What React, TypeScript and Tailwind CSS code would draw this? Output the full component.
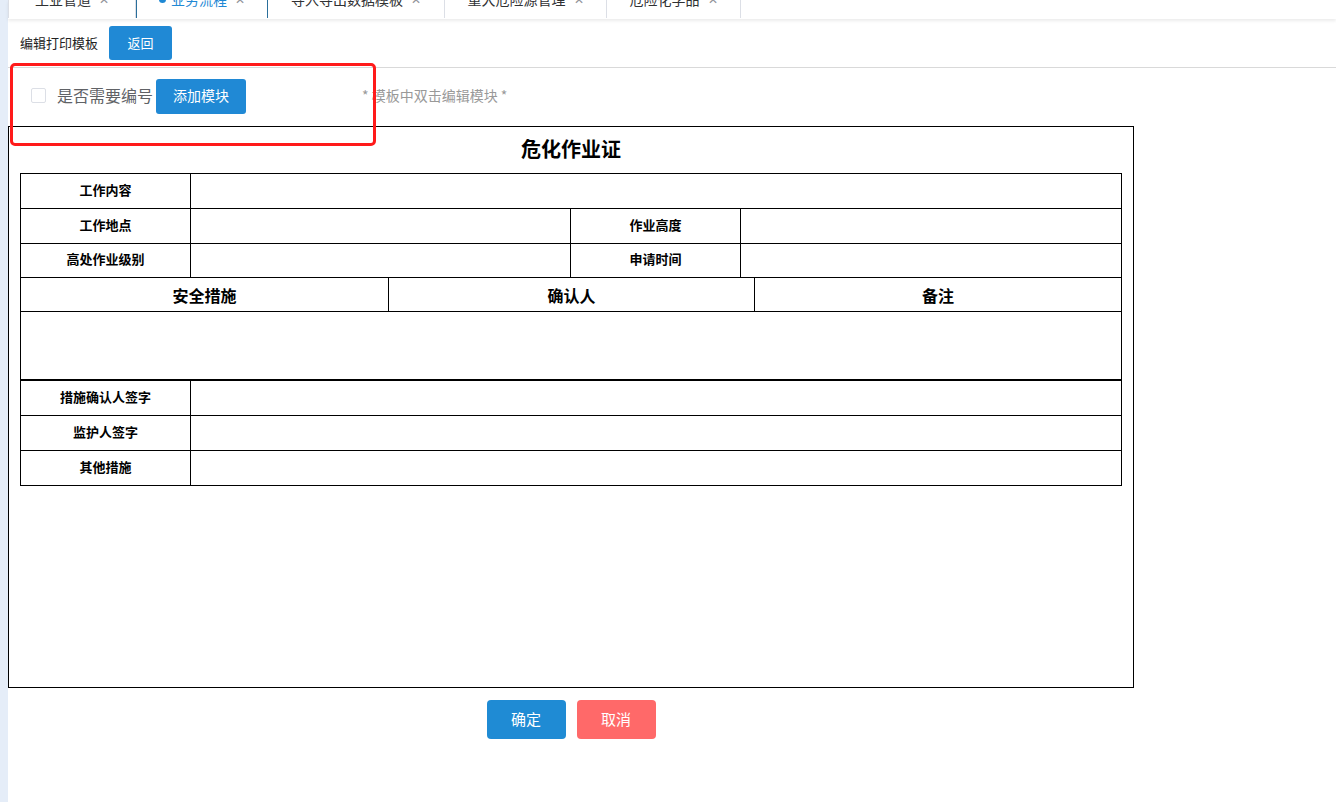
const tabs = [
  { label: '工业管道', width: 'w-[128px]', active: false },
  { label: '业务流程', width: 'w-[132px]', active: true },
  { label: '导入导出数据模板', width: 'w-[177px]', active: false },
  { label: '重大危险源管理', width: 'w-[162px]', active: false },
  { label: '危险化学品', width: 'w-[134px]', active: false },
];

const Label = ({ children, className = '' }: { children: React.ReactNode; className?: string }) => (
  <div className={`flex items-center justify-center pb-[3px] text-[13px] font-bold text-black ${className}`}>{children}</div>
);

export default function App() {
  return (
    <div
      className="relative flex min-h-[802px] w-full bg-white"
      style={{ fontFamily: '"Noto Sans CJK SC", "Noto Sans", sans-serif' }}
    >
      {/* left strip */}
      <div className="w-[8px] shrink-0 bg-[#e5edf8]" />

      <div className="flex-1 min-w-0">
        {/* Tab bar (scrolled, only lower half visible) */}
        <div className="relative z-10 flex h-[19px] overflow-hidden bg-white shadow-[0_2px_3px_rgba(0,0,0,0.08)]">
          {tabs.map((t, i) => (
            <div
              key={t.label}
              className={`flex h-[18px] shrink-0 items-start justify-center ${t.width} ${
                t.active ? 'border-x border-[#2a6f9b] text-[#1e88d4]' : 'border-r border-[#dcdfe6] text-[#303133]'
              } ${i === 0 ? 'border-l border-l-[#dcdfe6]' : ''}`}
            >
              <div className="-mt-[9px] flex h-[16px] items-center gap-[8px] text-[14px] leading-[16px]">
                {t.active && <span className="-mr-[3px] h-[7px] w-[7px] rounded-full bg-[#1e88d4]" />}
                <span>{t.label}</span>
                <span className="text-[12px] text-[#909399]">✕</span>
              </div>
            </div>
          ))}
        </div>

        {/* header */}
        <div className="flex h-[49px] items-center gap-[11px] border-b border-[#d9d9d9] pl-[12px]">
          <span className="text-[13px] text-[#222]">编辑打印模板</span>
          <button className="h-[34px] w-[63px] rounded-[3px] bg-[#2089d5] text-[13px] text-white">返回</button>
        </div>

        {/* toolbar */}
        <div className="mt-[11px] flex h-[35px] items-center pb-[3px] pl-[23px]">
          <span className="h-[15px] w-[15px] rounded-[2px] border border-[#dcdfe6] bg-white" />
          <span className="ml-[11px] text-[16px] text-[#606266]">是否需要编号</span>
          <button className="ml-[3px] -mb-[3px] h-[35px] w-[90px] rounded-[3px] bg-[#2089d5] pb-[3px] text-[14px] text-white">添加模块</button>
          <span className="ml-[116px] text-[14px] text-[#999]">* 模板中双击编辑模块 *</span>
        </div>

        {/* form */}
        <div className="mt-[12px] h-[562px] w-[1126px] border border-black px-[11px]">
          <div className="flex h-[46px] items-end justify-center pb-[10px] text-[20px] font-bold text-black leading-[28px]">
            危化作业证
          </div>
          <div className="w-[1102px] border border-black">
            <div className="flex h-[35px] border-b border-black">
              <Label className="w-[170px] border-r border-black">工作内容</Label>
              <div className="flex-1" />
            </div>
            <div className="flex h-[35px] border-b border-black">
              <Label className="w-[170px] border-r border-black">工作地点</Label>
              <div className="w-[380px] border-r border-black" />
              <Label className="w-[170px] border-r border-black">作业高度</Label>
              <div className="flex-1" />
            </div>
            <div className="flex h-[34px] border-b border-black">
              <Label className="w-[170px] border-r border-black">高处作业级别</Label>
              <div className="w-[380px] border-r border-black" />
              <Label className="w-[170px] border-r border-black">申请时间</Label>
              <div className="flex-1" />
            </div>
            <div className="flex h-[34px] border-b border-black text-[16px] font-bold">
              <div className="flex w-[368px] items-center justify-center border-r border-black">安全措施</div>
              <div className="flex w-[366px] items-center justify-center border-r border-black">确认人</div>
              <div className="flex flex-1 items-center justify-center">备注</div>
            </div>
            <div className="h-[69px] border-b-2 border-black" />
            <div className="flex h-[35px] border-b border-black">
              <Label className="w-[170px] border-r border-black">措施确认人签字</Label>
              <div className="flex-1" />
            </div>
            <div className="flex h-[35px] border-b border-black">
              <Label className="w-[170px] border-r border-black">监护人签字</Label>
              <div className="flex-1" />
            </div>
            <div className="flex h-[34px]">
              <Label className="w-[170px] border-r border-black">其他措施</Label>
              <div className="flex-1" />
            </div>
          </div>
        </div>

        {/* actions */}
        <div className="mt-[12px] flex w-[1126px] justify-center gap-[11px]">
          <button className="h-[39px] w-[79px] rounded-[4px] bg-[#1f8bd4] text-[15px] text-white">确定</button>
          <button className="h-[39px] w-[79px] rounded-[4px] bg-[#ff6969] text-[15px] text-white">取消</button>
        </div>
      </div>

      {/* annotation box */}
      <div className="pointer-events-none absolute left-[10px] top-[63px] h-[83px] w-[366px] rounded-[5px] border-[3px] border-[#ff1a1a]" />
    </div>
  );
}
